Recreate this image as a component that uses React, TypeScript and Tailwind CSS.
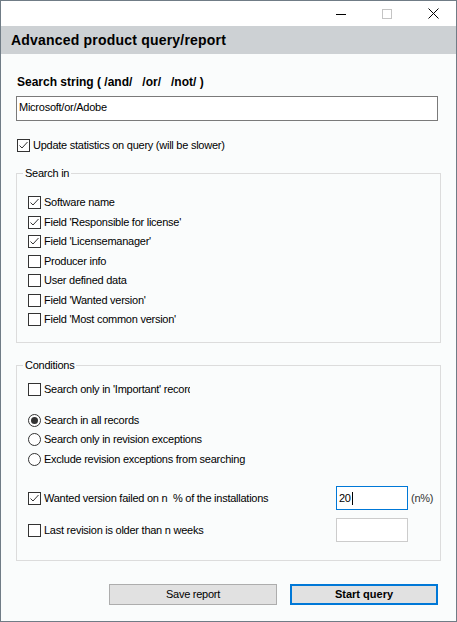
import type { ReactNode } from 'react';

function Check({ checked = false }: { checked?: boolean }) {
  return (
    <span className="flex h-[13px] w-[13px] shrink-0 items-center justify-center border border-[#333333] bg-white">
      {checked && (
        <svg width="11" height="11" viewBox="0 0 11 11" fill="none">
          <path d="M1.5 5.5 L4 8 L9.5 2" stroke="#333333" strokeWidth="1" />
        </svg>
      )}
    </span>
  );
}

function Radio({ checked = false }: { checked?: boolean }) {
  return (
    <span className="flex h-[13px] w-[13px] shrink-0 items-center justify-center rounded-full border border-[#333333] bg-white">
      {checked && <span className="h-[7px] w-[7px] rounded-full bg-[#333333]" />}
    </span>
  );
}

function Row({ children, label }: { children: ReactNode; label: ReactNode }) {
  return (
    <div className="flex h-[19.5px] items-center gap-[3px]">
      {children}
      <span>{label}</span>
    </div>
  );
}

const searchIn = [
  { label: 'Software name', checked: true },
  { label: "Field 'Responsible for license'", checked: true },
  { label: "Field 'Licensemanager'", checked: true },
  { label: 'Producer info', checked: false },
  { label: 'User defined data', checked: false },
  { label: "Field 'Wanted version'", checked: false },
  { label: "Field 'Most common version'", checked: false },
];

const radios = [
  { label: 'Search in all records', checked: true },
  { label: 'Search only in revision exceptions', checked: false },
  { label: 'Exclude revision exceptions from searching', checked: false },
];

export default function App() {
  return (
    <div className="flex h-[622px] w-[457px] flex-col border border-[#707c86] bg-[#fafcfc] font-['Liberation_Sans',Arial,sans-serif] text-[11px] leading-[13px] tracking-[-0.25px] text-black">
      {/* caption bar */}
      <div className="flex h-[25px] shrink-0 justify-end bg-white">
        <div className="flex w-[46px] items-center justify-center">
          <span className="mt-[1px] h-px w-[10px] bg-black" />
        </div>
        <div className="flex w-[46px] items-center justify-center">
          <span className="h-[10px] w-[10px] border border-[#c4c4c4]" />
        </div>
        <div className="flex w-[46px] items-center justify-center">
          <svg width="11" height="11" viewBox="0 0 11 11">
            <path d="M0.5 0.5 L10.5 10.5 M10.5 0.5 L0.5 10.5" stroke="#000" strokeWidth="1" />
          </svg>
        </div>
      </div>

      <div className="flex h-[28px] shrink-0 items-center bg-[#cdd1d4] pl-[10px] text-[14px] font-bold tracking-[0.2px]">
        Advanced product query/report
      </div>

      <div className="flex flex-col px-[15px]">
        <div className="mt-[22px] h-[13px] pl-[1px] text-[12px] font-bold tracking-normal">
          Search string ( /and/&nbsp;&nbsp; /or/&nbsp;&nbsp; /not/ )
        </div>

        <div className="mt-[7px] h-[25px] w-[422px] border border-[#7a7a7a] bg-white px-[2px] pt-[4px]">
          Microsoft/or/Adobe
        </div>

        <div className="mt-[18px] flex items-center gap-[3px] pl-[1px]">
          <Check checked />
          <span>Update statistics on query (will be slower)</span>
        </div>

        <fieldset className="mt-[15px] h-[176px] w-[425px] border border-[#dcdcdc] pl-[11px] pt-[13px]">
          <legend className="ml-[-5px] px-[2px]">Search in</legend>
          {searchIn.map((item) => (
            <Row key={item.label} label={item.label}>
              <Check checked={item.checked} />
            </Row>
          ))}
        </fieldset>

        <fieldset className="mt-[16px] h-[202px] w-[425px] border border-[#dcdcdc] pl-[11px] pt-[8px]">
          <legend className="ml-[-5px] px-[2px]">Conditions</legend>
          <div className="flex h-[19.5px] items-center gap-[3px]">
            <Check />
            <span className="w-[146px] overflow-hidden whitespace-nowrap">Search only in 'Important' records</span>
          </div>

          <div className="mt-[11px]">
            {radios.map((item) => (
              <Row key={item.label} label={item.label}>
                <Radio checked={item.checked} />
              </Row>
            ))}
          </div>

          <div className="mt-[17px] flex h-[24px] items-center">
            <div className="flex w-[308px] items-center gap-[3px]">
              <Check checked />
              <span>Wanted version failed on n&nbsp; % of the installations</span>
            </div>
            <div className="flex h-[24px] w-[72px] items-center border border-[#0078d7] bg-white px-[2px]">
              20<span className="ml-px h-[13px] w-px bg-black" />
            </div>
            <span className="ml-[3px] text-[#333]">(n%)</span>
          </div>

          <div className="mt-[8px] flex h-[24px] items-center">
            <div className="flex w-[308px] items-center gap-[3px]">
              <Check />
              <span>Last revision is older than n weeks</span>
            </div>
            <div className="h-[24px] w-[72px] border border-[#cccccc] bg-white" />
          </div>
        </fieldset>

        <div className="mt-[23px] flex gap-[13px] pl-[93px]">
          <button className="h-[21px] w-[168px] border border-[#adadad] bg-[#e1e1e1] text-[11px]">Save report</button>
          <button className="h-[21px] w-[148px] border-2 border-[#0078d7] bg-[#e1e1e1] text-[11px] font-bold tracking-normal">
            Start query
          </button>
        </div>
      </div>
    </div>
  );
}
